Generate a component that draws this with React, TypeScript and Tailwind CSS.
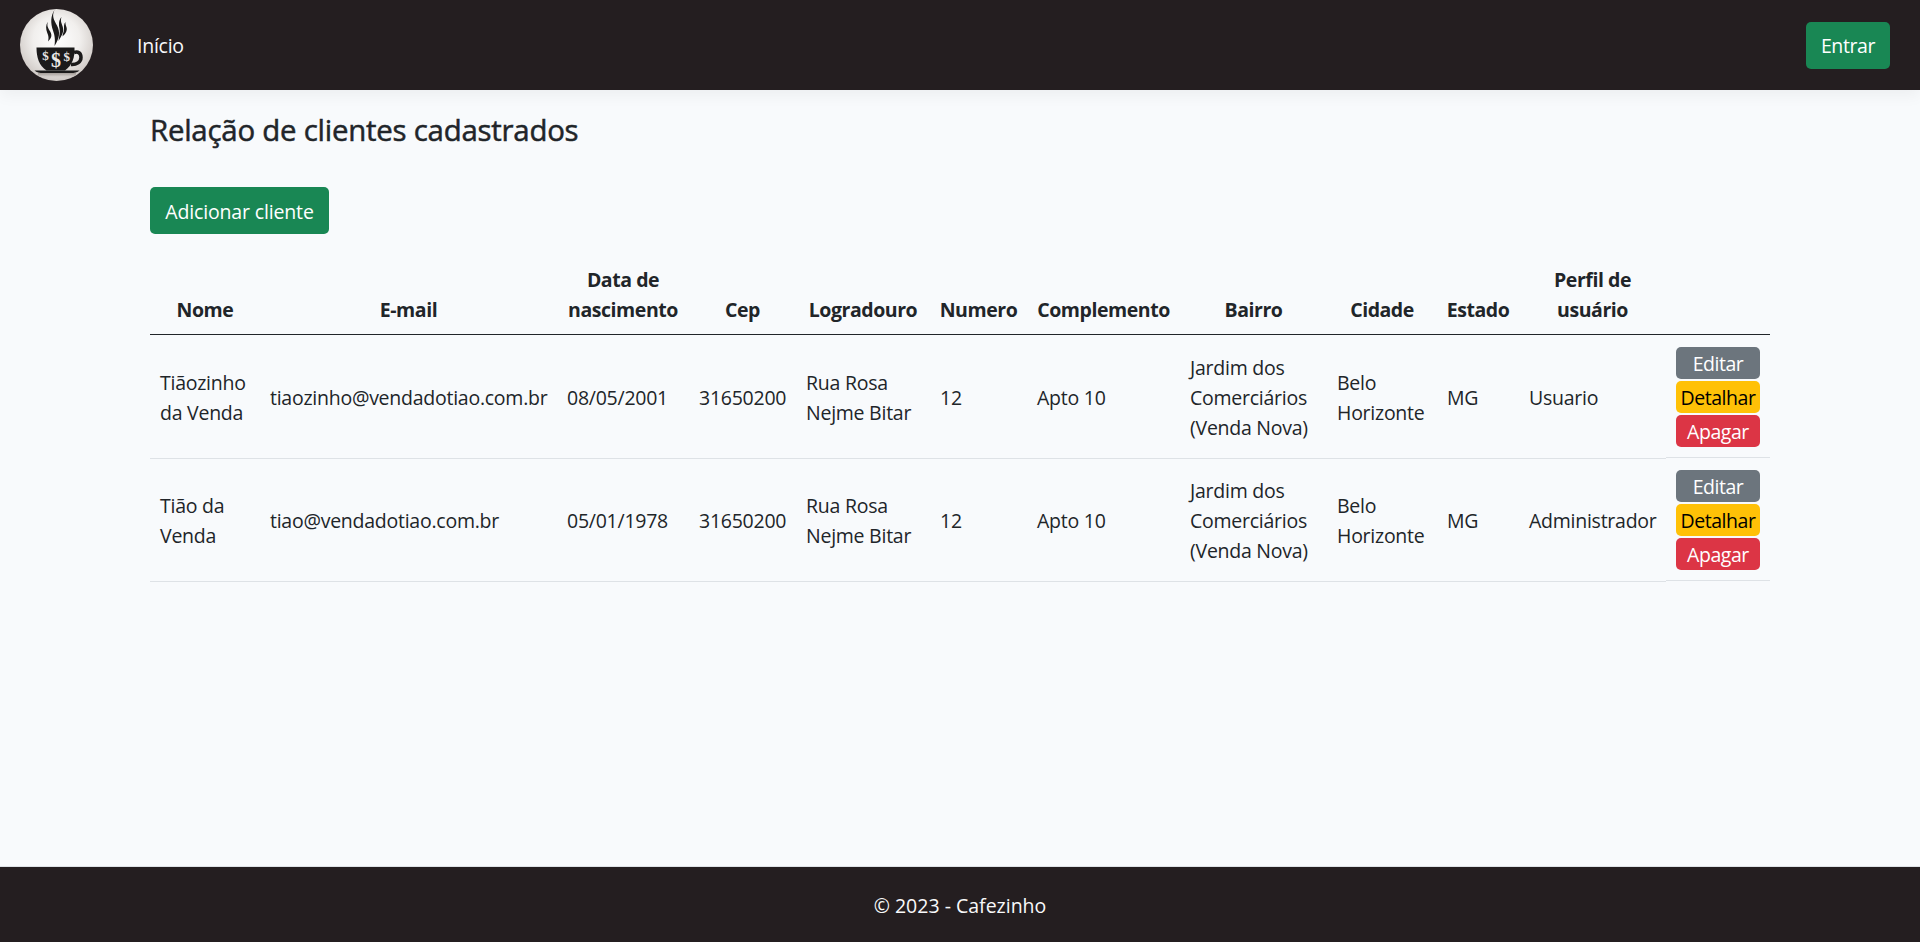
import React from "react";

type Client = {
  name: React.ReactNode;
  email: string;
  birth: string;
  cep: string;
  profile: string;
};

const clients: Client[] = [
  { name: <>Tiãozinho<br />da Venda</>, email: "tiaozinho@vendadotiao.com.br", birth: "08/05/2001", cep: "31650200", profile: "Usuario" },
  { name: <>Tião da<br />Venda</>, email: "tiao@vendadotiao.com.br", birth: "05/01/1978", cep: "31650200", profile: "Administrador" },
];

const columns: React.ReactNode[] = [
  "Nome",
  "E-mail",
  <>Data de<br />nascimento</>,
  "Cep",
  "Logradouro",
  "Numero",
  "Complemento",
  "Bairro",
  "Cidade",
  "Estado",
  <>Perfil de<br />usuário</>,
  "",
];

function Logo() {
  return (
    <svg viewBox="0 0 73 72" className="h-[72px] w-[73px]">
      <defs>
        <radialGradient id="plate" cx="0.5" cy="0.42" r="0.58">
          <stop offset="0" stopColor="#ffffff" />
          <stop offset="0.55" stopColor="#f1efed" />
          <stop offset="1" stopColor="#cfc9c5" />
        </radialGradient>
        <linearGradient id="floor" x1="0" y1="0" x2="0" y2="1">
          <stop offset="0" stopColor="#8d8580" />
          <stop offset="1" stopColor="#d9d4d0" />
        </linearGradient>
        <clipPath id="disc">
          <ellipse cx="36.5" cy="36" rx="36.5" ry="36" />
        </clipPath>
      </defs>
      <g clipPath="url(#disc)">
        <rect width="73" height="72" fill="url(#plate)" />
        <rect x="18" y="64" width="38" height="4" fill="url(#floor)" opacity="0.7" />
        <path d="M34.500 1C31.500 7 34 11 37 16.500c3.500 6.500 2.500 13-2.500 20.500C35.500 30 34.500 26 33 21.500 30.500 14 30.500 7 34.500 1Z" fill="#1b1a1a" />
        <path d="M28 12.500c-1.500 4 0 6.500 2.200 10 2.300 4 1 7-2.200 10 1-3.500.5-5.500-.7-8.500-1.600-4-1.800-8 .7-11.500Z" fill="#1b1a1a" />
        <path d="M41.500 8c-1.500 4 .3 6.500 1.300 10 1.500 5.500-1.500 9-4.300 14 .5-5 1.800-8.500 1-12.500-.8-4-1-8 2-11.500Z" fill="#1b1a1a" />
        <path d="M45.500 13c-.5 4 2.500 5.500.8 9.500-1 2-2 3.500-3.800 5 .2-3 1.500-4.500 1.500-7.500 0-2.500-.3-5 1.500-7Z" fill="#1b1a1a" />
        <path d="M16.500 38.500h38c.5 9.500-2 17.500-9.500 23H26.500C19 56.500 16.500 48.500 16.500 38.500Z" fill="#1b1a1a" />
        <path d="M54 43.500c4-1.500 7 .5 7 5s-4.500 7.500-10 7" fill="none" stroke="#1b1a1a" strokeWidth="3.500" />
        <path d="M14.500 61.500h45c-2 2-5 2.500-9 2.500h-27c-4 0-7-.5-9-2.500Z" fill="#1b1a1a" />
        <g fill="#ece9e7" textAnchor="middle" className="font-['Liberation_Serif',serif] font-bold tracking-normal">
          <text x="25.500" y="50.500" fontSize="13">$</text>
          <text x="36" y="57.500" fontSize="20">$</text>
          <text x="46.700" y="52" fontSize="13">$</text>
        </g>
      </g>
    </svg>
  );
}

function ClientRow({ client, index }: { client: Client; index: number }) {
  const cell = "border-b border-[#dee2e6] px-2.5 pt-0.5";
  return (
    <tr className={index === 0 ? "h-[124px]" : "h-[123px]"}>
      <td className={cell}>{client.name}</td>
      <td className={cell}>{client.email}</td>
      <td className={cell}>{client.birth}</td>
      <td className={cell}>{client.cep}</td>
      <td className={cell}>Rua Rosa<br />Nejme Bitar</td>
      <td className={cell}>12</td>
      <td className={cell}>Apto 10</td>
      <td className={cell}>Jardim dos<br />Comerciários<br />(Venda Nova)</td>
      <td className={cell}>Belo<br />Horizonte</td>
      <td className={cell}>MG</td>
      <td className={cell}>{client.profile}</td>
      <td className="p-0 align-top">
        <div className={`flex flex-col gap-0.5 border-b border-[#dee2e6] px-2.5 pb-2.5 leading-[34px] tracking-[-0.45px] ${index === 0 ? "pt-3" : "pt-[11px]"}`}>
          <button className="h-8 rounded-[5px] bg-[#6c757d] text-center text-white">Editar</button>
          <button className="h-8 rounded-[5px] bg-[#ffc107] text-center text-black">Detalhar</button>
          <button className="h-8 rounded-[5px] bg-[#dc3545] text-center text-white">Apagar</button>
        </div>
      </td>
    </tr>
  );
}

export default function App() {
  return (
    <div className="flex h-[942px] flex-col overflow-hidden bg-[#f8fafc] font-['Open_Sans',sans-serif] text-[19.5px] leading-[30px] tracking-[-0.25px] whitespace-nowrap text-[#212529]">
      <header className="flex h-[90px] shrink-0 items-center bg-[#241e20] pr-[30px] pl-5 shadow-[0_5px_15px_rgba(0,0,0,0.05)]">
        <Logo />
        <a className="ml-11 pt-0.5 text-[#f8f9fa]">Início</a>
        <button className="ml-auto h-[47px] w-[84px] rounded-[5px] bg-[#198754] pt-0.5 tracking-[-0.4px] text-white">Entrar</button>
      </header>
      <main className="mx-[150px] flex-1">
        <h4 className="mt-[22px] text-[29.4px] leading-9 font-medium tracking-[-0.23px] [-webkit-text-stroke:0.5px_#212529]">Relação de clientes cadastrados</h4>
        <button className="mt-[39px] block h-[47px] w-[179px] rounded-[5px] bg-[#198754] pt-0.5 tracking-[-0.15px] text-white">Adicionar cliente</button>
        <table className="mt-5 w-[1620px] table-fixed border-separate border-spacing-0">
          <colgroup>
            <col className="w-[110px]" />
            <col className="w-[297px]" />
            <col className="w-[132px]" />
            <col className="w-[107px]" />
            <col className="w-[134px]" />
            <col className="w-[97px]" />
            <col className="w-[153px]" />
            <col className="w-[147px]" />
            <col className="w-[110px]" />
            <col className="w-[82px]" />
            <col className="w-[147px]" />
            <col className="w-[104px]" />
          </colgroup>
          <thead>
            <tr className="h-[81px]">
              {columns.map((label, i) => (
                <th key={i} className="border-b border-[#212529] px-0 pt-[11px] pb-[9px] text-center align-bottom font-bold tracking-[-0.45px]">{label}</th>
              ))}
            </tr>
          </thead>
          <tbody>
            {clients.map((client, i) => (
              <ClientRow key={client.email} client={client} index={i} />
            ))}
          </tbody>
        </table>
      </main>
      <footer className="flex h-[76px] shrink-0 items-center justify-center border-t border-[#dee2e6] bg-[#241e20] pt-0.5 tracking-normal text-[#f8f9fa]">
        © 2023 - Cafezinho
      </footer>
    </div>
  );
}
